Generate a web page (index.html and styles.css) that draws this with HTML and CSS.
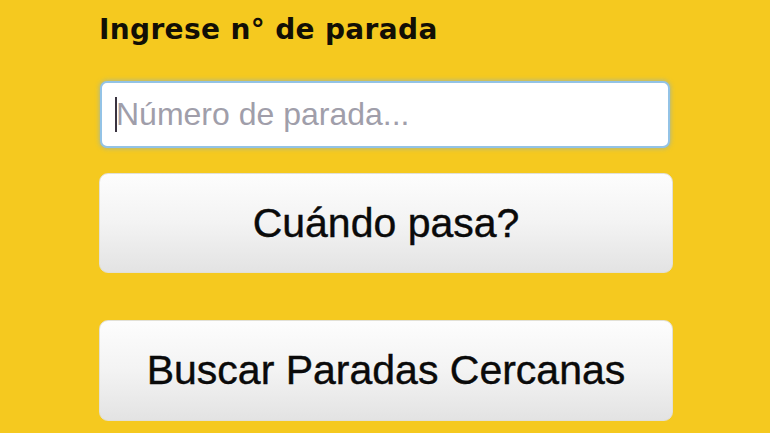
FILE: index.html
```html
<!DOCTYPE html>
<html lang="es">
<head>
<meta charset="utf-8">
<title>Cuándo pasa</title>
<link rel="stylesheet" href="styles.css">
</head>
<body>
<main class="panel">
  <h1 class="title">Ingrese n° de parada</h1>
  <div class="field">
    <input class="stop-input" type="text" placeholder="Número de parada...">
    <span class="caret"></span>
  </div>
  <button class="btn btn-first" type="button">Cuándo pasa?</button>
  <button class="btn btn-second" type="button">Buscar Paradas Cercanas</button>
</main>
</body>
</html>
```
FILE: styles.css
```css
html, body {
  margin: 0;
  padding: 0;
  background: #f5c91f;
  width: 770px;
  height: 433px;
  overflow: hidden;
}

.panel {
  display: flex;
  flex-direction: column;
  align-items: flex-start;
  padding: 13px 0 0 99px;
  width: 574px;
}

.title {
  margin: 0;
  font-family: "DejaVu Sans", Verdana, sans-serif;
  font-weight: bold;
  font-size: 28px;
  line-height: 34px;
  color: #120f05;
  letter-spacing: 0.35px;
}

.field {
  position: relative;
  margin: 34px 0 0 1px;
}

.stop-input {
  display: block;
  box-sizing: border-box;
  width: 570px;
  height: 67px;
  margin: 0;
  padding: 0 0 0 14px;
  border: 2px solid #93c3e6;
  border-radius: 7px;
  background: #ffffff;
  box-shadow: 0 0 5px rgba(120, 175, 225, 0.75);
  font-family: "Liberation Sans", Arial, sans-serif;
  font-size: 32px;
  color: #222;
  outline: none;
}

.stop-input::placeholder {
  color: #a09eaa;
  opacity: 1;
}

.caret {
  position: absolute;
  left: 15px;
  top: 16px;
  width: 2px;
  height: 35px;
  background: #3a3340;
}

.btn {
  display: flex;
  align-items: center;
  justify-content: center;
  box-sizing: border-box;
  width: 574px;
  height: 100px;
  margin: 25px 0 0 0;
  padding: 0;
  border: 1px solid #e2e0d6;
  border-radius: 9px;
  background: linear-gradient(to bottom, #fdfdfd 0%, #f3f3f3 50%, #e3e3e3 100%);
  font-family: "Liberation Sans", Arial, sans-serif;
  font-size: 41px;
  color: #0a0a0a;
  -webkit-text-stroke: 0.4px #0a0a0a;
  cursor: pointer;
}

.btn-second {
  margin-top: 47px;
  height: 101px;
}
```
